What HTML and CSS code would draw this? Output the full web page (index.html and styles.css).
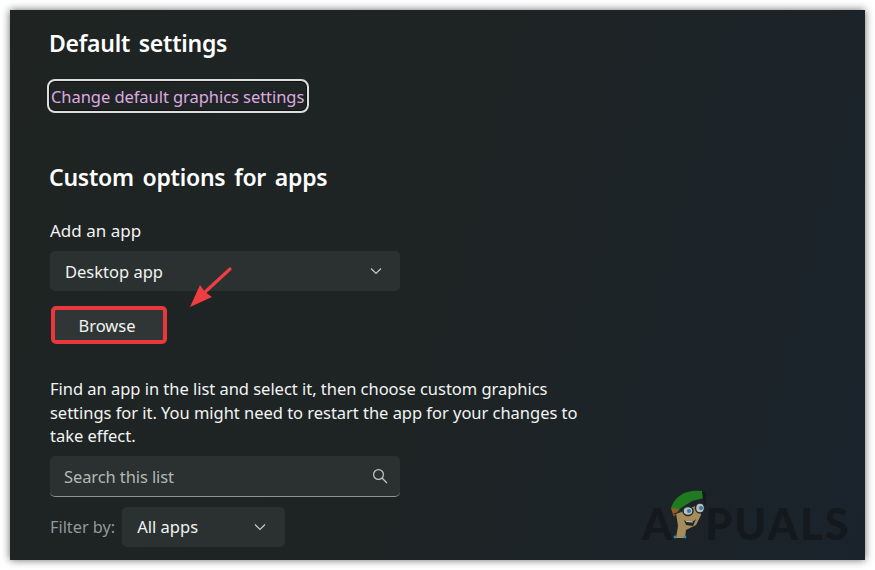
FILE: index.html
```html
<!DOCTYPE html>
<html lang="en">
<head>
    <meta charset="UTF-8">
    <meta name="viewport" content="width=device-width, initial-scale=1.0">
    <title>Graphics settings</title>
    <link rel="stylesheet" href="styles.css">
</head>
<body>
    <div class="window">
        <h2 class="heading">Default settings</h2>
        <a class="link" href="#">Change default graphics settings</a>

        <h2 class="heading heading-custom">Custom options for apps</h2>
        <p class="label">Add an app</p>
        <div class="select select-wide">
            <span>Desktop app</span>
            <svg class="chevron" width="12" height="8" viewBox="0 0 12 8"><path d="M1 1.5 L6 6.5 L11 1.5" fill="none" stroke="#c8cbca" stroke-width="1.2"/></svg>
        </div>
        <button class="browse">Browse</button>

        <p class="desc">Find an app in the list and select it, then choose custom graphics settings for it. You might need to restart the app for your changes to take effect.</p>

        <div class="search">
            <span>Search this list</span>
            <svg width="16" height="16" viewBox="0 0 16 16"><circle cx="6.5" cy="6.5" r="4.9" fill="none" stroke="#c4c8c7" stroke-width="1.2"/><path d="M10 10 L15 15" stroke="#c4c8c7" stroke-width="1.3"/></svg>
        </div>

        <div class="filter">
            <span class="filter-label">Filter by:</span>
            <div class="select select-small">
                <span>All apps</span>
                <svg class="chevron" width="12" height="8" viewBox="0 0 12 8"><path d="M1 1.5 L6 6.5 L11 1.5" fill="none" stroke="#c8cbca" stroke-width="1.2"/></svg>
            </div>
        </div>

        <!-- red annotation arrow -->
        <svg class="arrow" width="44" height="44" viewBox="0 0 44 44">
            <path d="M41 3 L15 27" stroke="#ef3e42" stroke-width="3.2" stroke-linecap="round"/>
            <path d="M1 41 L11 19 L16 26 L23 31 Z" fill="#ef3e42"/>
        </svg>

        <!-- watermark -->
        <div class="logo">
            <span class="logo-a">A</span>
            <svg class="mascot" width="36" height="50" viewBox="0 0 36 50">
                <path d="M5 23 L30 14 L30 25 L25 35 L15 40 L14 48 L5 48 L7 36 Z" fill="#a68b5b"/>
                <path d="M0 18 C2 12 6 7 10 5 C14 2 22 0 31 1 L33 8 L21 11 L10 18 L3 26 Z" fill="#1f7a20"/>
                <path d="M0 18 L3 27 L8 19 Z" fill="#9a5a26"/>
                <path d="M31 1 L35 3 L35 16 L33 17 Z" fill="#14191e"/>
                <ellipse cx="17" cy="21" rx="5" ry="4.5" fill="#b6bec2" stroke="#20262b" stroke-width="1.4"/>
                <ellipse cx="29" cy="18" rx="4.5" ry="5" fill="#b6bec2" stroke="#20262b" stroke-width="1.4"/>
                <circle cx="18" cy="21" r="2" fill="#2d7f9c"/>
                <circle cx="30" cy="18" r="2" fill="#2d7f9c"/>
                <path d="M3 24 L12 21" stroke="#20262b" stroke-width="1.3"/>
                <path d="M13 30 C17 33 21 33 25 29 L22 36 L15 35 Z" fill="#20262b"/>
                <path d="M15 31.5 L22 32" stroke="#b6bec2" stroke-width="1"/>
                <circle cx="4" cy="47" r="1.4" fill="#2d8fb0"/>
                <circle cx="14" cy="47" r="1.4" fill="#2d8fb0"/>
            </svg>
            <span class="logo-rest">PUALS</span>
        </div>
    </div>
</body>
</html>
```

FILE: styles.css
```css
* {
    box-sizing: border-box;
}
body {
    margin: 0;
    background-color: #fff;
    font-family: 'Noto Sans', sans-serif;
    overflow: hidden;
}
.window {
    position: relative;
    width: 855px;
    height: 550px;
    margin: 10px;
    padding: 18px 0 0 39px;
    overflow: hidden;
    color: #f2f3f3;
    background: linear-gradient(105deg, #1f2423 0%, #1e2424 50%, #1a232c 100%);
    box-shadow: 0 0 8px rgba(0, 0, 0, 0.6);
}
.heading {
    margin: 0;
    font-size: 23px;
    line-height: 30px;
    font-weight: 600;
    letter-spacing: -0.25px;
    word-spacing: 3px;
    color: #fff;
}
.heading-custom {
    margin-top: 49px;
}
.link {
    display: block;
    width: 262px;
    height: 34px;
    margin: 21px 0 0 -2px;
    padding-left: 2px;
    border: 2px solid #dedede;
    border-radius: 8px;
    box-shadow: inset 0 0 0 1px #111;
    color: #dda9e0;
    font-size: 16.5px;
    line-height: 31px;
    letter-spacing: -0.06px;
    text-decoration: none;
    white-space: nowrap;
}
.label {
    margin: 27px 0 0 1px;
    font-size: 17px;
    line-height: 24px;
}
.select {
    display: flex;
    justify-content: space-between;
    align-items: center;
    height: 40px;
    background-color: #2a3130;
    border-radius: 5px;
    font-size: 16.5px;
}
.select-wide {
    width: 350px;
    margin: 8px 0 0 1px;
    padding: 0 18px 0 15px;
}
.browse {
    display: block;
    width: 116px;
    height: 38px;
    margin: 15px 0 0 2px;
    padding: 1px 4px 0 0;
    background-color: #2f3635;
    border: 4px solid #e8383d;
    border-radius: 5px;
    color: #f2f3f3;
    font-family: inherit;
    font-size: 16.5px;
}
.desc {
    width: 540px;
    margin: 33px 0 0 1px;
    font-size: 16.5px;
    line-height: 23.5px;
    letter-spacing: -0.03px;
}
.search {
    display: flex;
    justify-content: space-between;
    align-items: center;
    width: 350px;
    height: 41px;
    margin: 8px 0 0 1px;
    padding: 1px 12px 0 14px;
    background-color: #2a3130;
    border-radius: 5px;
    border-bottom: 1px solid #8f9493;
    color: #b4b8b7;
    font-size: 16.5px;
    letter-spacing: -0.1px;
}
.filter {
    display: flex;
    align-items: center;
    gap: 7px;
    margin: 10px 0 0 1px;
}
.filter-label {
    color: #93989a;
    font-size: 16.3px;
}
.select-small {
    width: 163px;
    padding: 0 19px 0 15px;
}
.arrow {
    position: absolute;
    left: 179px;
    top: 256px;
}
.logo {
    position: absolute;
    left: 632px;
    top: 480px;
    display: flex;
    align-items: flex-end;
    color: #14191e;
    font-family: 'Lato', sans-serif;
    font-size: 43px;
    font-weight: 900;
    line-height: 52px;
}
.logo-a, .logo-rest {
    margin-bottom: -10px;
}
.logo-rest {
    letter-spacing: 2.2px;
}
.mascot {
    margin: 0 -2px 0 -1px;
}
```
